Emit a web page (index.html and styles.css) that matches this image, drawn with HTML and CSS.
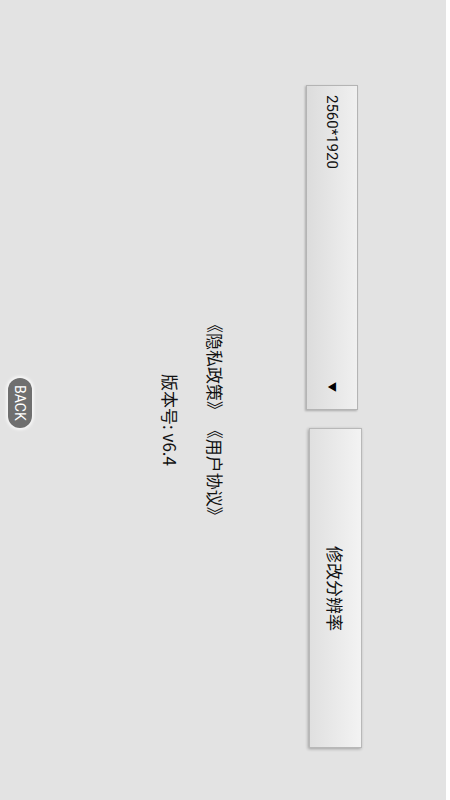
FILE: index.html
```html
<!DOCTYPE html>
<html lang="zh-CN">
<head>
    <meta charset="UTF-8">
    <meta name="viewport" content="width=device-width, initial-scale=1.0">
    <title>设置</title>
    <link rel="stylesheet" href="styles.css">
</head>
<body>

    <!-- Tela (paisagem girada) -->
    <div class="screen">

        <!-- Controles de resolução -->
        <div class="controls">
            <div class="spinner">
                <span class="spinner-value">2560*1920</span>
                <span class="spinner-arrow">▼</span>
            </div>
            <button class="btn-resolution">修改分辨率</button>
        </div>

        <!-- Informações -->
        <div class="info">
            <p class="links">《隐私政策》 《用户协议》</p>
            <p class="version">版本号: v6.4</p>
        </div>

        <button class="btn-back">BACK</button>
    </div>

</body>
</html>
```

FILE: styles.css
```css
* {
    margin: 0;
    padding: 0;
    box-sizing: border-box;
}

body {
    background-color: #ffffff;
    font-family: Roboto, "Noto Sans CJK SC", sans-serif;
    color: #111;
}

/* Tela girada */
.screen {
    writing-mode: vertical-rl;
    text-orientation: sideways;
    display: flex;
    flex-direction: column;
    inline-size: 800px;
    block-size: 446px;
    background-color: #e3e3e3;
    padding-block-start: 88px;
    padding-block-end: 8px;
}

/* Controles */
.controls {
    display: flex;
}

.spinner {
    display: flex;
    justify-content: space-between;
    align-items: center;
    inline-size: 325px;
    block-size: 52px;
    margin-inline-start: 85px;
    padding-inline-start: 9px;
    padding-inline-end: 17px;
    background: linear-gradient(to left, #f0f0f0, #dcdcdc);
    border: 1px solid #b4b4b4;
    box-shadow: -1px 1px 2px rgba(0, 0, 0, 0.25);
}

.spinner-value {
    font-family: Roboto, sans-serif;
    font-size: 15px;
    color: #111;
}

.spinner-arrow {
    font-size: 10px;
    color: #000;
}

.btn-resolution {
    inline-size: 320px;
    block-size: 53px;
    margin-inline-start: 18px;
    margin-block-start: -4px;
    background: linear-gradient(to left, #f3f3f3, #e0e0e0);
    border: 1px solid #b8b8b8;
    box-shadow: -1px 1px 3px rgba(0, 0, 0, 0.3);
    font-family: "Noto Sans CJK SC", sans-serif;
    font-size: 17px;
    color: #111;
    cursor: pointer;
}

/* Informações */
.info {
    margin-block-start: 79px;
    padding-inline-start: 40px;
    text-align: center;
    font-family: "Noto Sans CJK SC", sans-serif;
    font-size: 17px;
}

.info p {
    line-height: 24px;
}

.version {
    margin-block-start: 21px;
}

/* Botão voltar */
.btn-back {
    margin-block-start: auto;
    margin-inline-start: 6px;
    align-self: center;
    inline-size: 50px;
    block-size: 24px;
    border: none;
    border-radius: 12px;
    background-color: #6f6f6f;
    box-shadow: 0 0 3px 2px rgba(255, 255, 255, 0.7);
    color: #fff;
    font-family: Roboto, sans-serif;
    font-size: 14px;
    cursor: pointer;
}
```
